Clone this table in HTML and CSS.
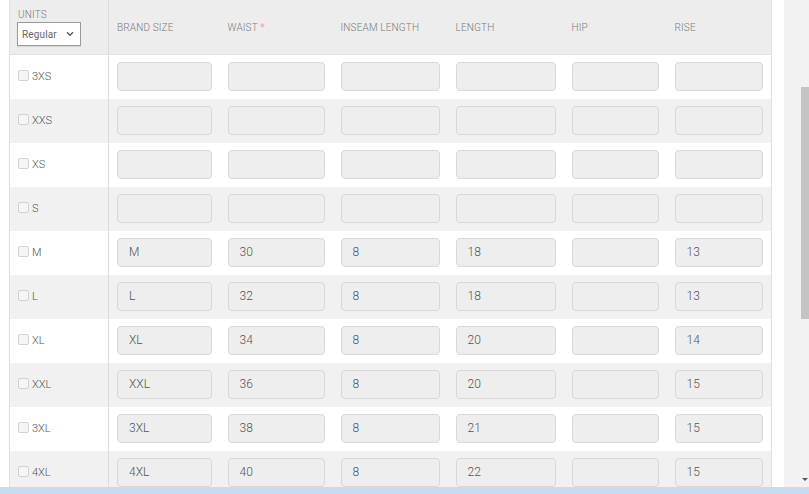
FILE: index.html
```html
<!DOCTYPE html>
<html>
<head>
<meta charset="utf-8">
<link rel="stylesheet" href="styles.css">
</head>
<body>
<div class="frame">
  <div class="main">
    <div class="content">
      <table class="sizes">
        <colgroup>
          <col class="c-units"><col class="c-brand"><col class="c-waist"><col class="c-inseam"><col class="c-length"><col class="c-hip"><col class="c-rise">
        </colgroup>
        <thead>
          <tr>
            <th class="units-head">
              <div class="units-label">UNITS</div>
              <div class="select">
                <span>Regular</span>
                <svg class="chev" width="8" height="6" viewBox="0 0 8 6"><path d="M1 1.2 L4 4.3 L7 1.2" fill="none" stroke="#555" stroke-width="1.3"/></svg>
              </div>
            </th>
            <th>BRAND SIZE</th>
            <th>WAIST <span class="req">*</span></th>
            <th>INSEAM LENGTH</th>
            <th>LENGTH</th>
            <th>HIP</th>
            <th>RISE</th>
          </tr>
        </thead>
        <tbody>
          <tr><td class="lab"><span class="cb"></span>3XS</td><td><div class="in"></div></td><td><div class="in"></div></td><td><div class="in"></div></td><td><div class="in"></div></td><td><div class="in"></div></td><td><div class="in"></div></td></tr>
          <tr><td class="lab"><span class="cb"></span>XXS</td><td><div class="in"></div></td><td><div class="in"></div></td><td><div class="in"></div></td><td><div class="in"></div></td><td><div class="in"></div></td><td><div class="in"></div></td></tr>
          <tr><td class="lab"><span class="cb"></span>XS</td><td><div class="in"></div></td><td><div class="in"></div></td><td><div class="in"></div></td><td><div class="in"></div></td><td><div class="in"></div></td><td><div class="in"></div></td></tr>
          <tr><td class="lab"><span class="cb"></span>S</td><td><div class="in"></div></td><td><div class="in"></div></td><td><div class="in"></div></td><td><div class="in"></div></td><td><div class="in"></div></td><td><div class="in"></div></td></tr>
          <tr><td class="lab"><span class="cb"></span>M</td><td><div class="in">M</div></td><td><div class="in">30</div></td><td><div class="in">8</div></td><td><div class="in">18</div></td><td><div class="in"></div></td><td><div class="in">13</div></td></tr>
          <tr><td class="lab"><span class="cb"></span>L</td><td><div class="in">L</div></td><td><div class="in">32</div></td><td><div class="in">8</div></td><td><div class="in">18</div></td><td><div class="in"></div></td><td><div class="in">13</div></td></tr>
          <tr><td class="lab"><span class="cb"></span>XL</td><td><div class="in">XL</div></td><td><div class="in">34</div></td><td><div class="in">8</div></td><td><div class="in">20</div></td><td><div class="in"></div></td><td><div class="in">14</div></td></tr>
          <tr><td class="lab"><span class="cb"></span>XXL</td><td><div class="in">XXL</div></td><td><div class="in">36</div></td><td><div class="in">8</div></td><td><div class="in">20</div></td><td><div class="in"></div></td><td><div class="in">15</div></td></tr>
          <tr><td class="lab"><span class="cb"></span>3XL</td><td><div class="in">3XL</div></td><td><div class="in">38</div></td><td><div class="in">8</div></td><td><div class="in">21</div></td><td><div class="in"></div></td><td><div class="in">15</div></td></tr>
          <tr><td class="lab"><span class="cb"></span>4XL</td><td><div class="in">4XL</div></td><td><div class="in">40</div></td><td><div class="in">8</div></td><td><div class="in">22</div></td><td><div class="in"></div></td><td><div class="in">15</div></td></tr>
        </tbody>
      </table>
    </div>
    <div class="gutter"></div>
    <div class="scrollbar">
      <div class="thumb"></div>
      <div class="arrow"></div>
    </div>
  </div>
  <div class="bottombar"></div>
</div>
</body>
</html>
```

FILE: styles.css
```css
html, body {
  margin: 0;
  padding: 0;
  background: #ffffff;
}
body {
  font-family: Roboto, "Liberation Sans", Arial, sans-serif;
  color: #666;
}
.frame {
  width: 809px;
  height: 494px;
  display: flex;
  flex-direction: column;
  overflow: hidden;
}
.main {
  height: 487px;
  display: flex;
  overflow: hidden;
}
.content {
  padding-left: 9px;
  width: 763px;
  flex: none;
}
.sizes {
  border-collapse: collapse;
  table-layout: fixed;
  width: 763px;
  border-left: 1px solid #dedede;
  border-right: 1px solid #dedede;
}
.c-units { width: 99px; }
.c-brand { width: 111px; }
.c-waist { width: 113px; }
.c-inseam { width: 115px; }
.c-length { width: 116px; }
.c-hip { width: 103px; }
.c-rise { width: 105px; }

.sizes th {
  height: 54px;
  background: #ededed;
  border-bottom: 1px solid #e2e2e2;
  text-align: left;
  font-weight: 300;
  font-size: 10px;
  color: #7c7c7c;
  padding: 0 8px;
  letter-spacing: 0.15px;
}
.sizes th.units-head {
  border-right: 1px solid #dcdcdc;
  padding: 0 0 0 8px;
  vertical-align: top;
}
.units-label {
  margin-top: 9px;
  line-height: 12px;
  font-size: 10px;
  color: #7c7c7c;
}
.select {
  margin-top: 1px;
  margin-left: -1px;
  width: 64px;
  height: 24px;
  box-sizing: border-box;
  border: 1px solid #9a9a9a;
  background: #fff;
  display: flex;
  align-items: center;
  justify-content: space-between;
  padding: 0 6px 0 4px;
  font-size: 10px;
  font-weight: 400;
  color: #666;
  box-shadow: 0 1px 1px rgba(0,0,0,0.08);
}
.chev { display: block; }
.req { color: #e58b8b; }

.sizes td {
  height: 44px;
  padding: 0 8px;
  box-sizing: border-box;
}
.sizes tbody tr:nth-child(even) td {
  background: #f1f1f1;
}
.sizes td.lab {
  border-right: 1px solid #dcdcdc;
  padding-left: 8px;
  font-size: 11px;
  font-weight: 300;
  color: #555;
}
.cb {
  display: inline-block;
  width: 9px;
  height: 9px;
  border: 1px solid #d3d3d3;
  border-radius: 2px;
  background: #f5f5f5;
  margin-right: 3px;
  vertical-align: -1px;
}
.in {
  height: 29px;
  box-sizing: border-box;
  border: 1px solid #d8d8d8;
  border-radius: 4px;
  background: #eeeeee;
  padding-left: 11px;
  font-size: 12px;
  font-weight: 300;
  line-height: 27px;
  color: #555;
}
.gutter {
  width: 12px;
  flex: none;
}
.scrollbar {
  flex: 1;
  background: #f2f2f2;
  position: relative;
  display: flex;
  flex-direction: column;
  align-items: flex-end;
}
.thumb {
  margin-top: 87px;
  width: 8px;
  height: 232px;
  background: #c4c4c4;
}
.arrow {
  position: absolute;
  right: 1px;
  bottom: 6px;
  width: 0;
  height: 0;
  border-left: 3px solid transparent;
  border-right: 3px solid transparent;
  border-top: 3px solid #555;
}
.bottombar {
  height: 7px;
  background: #c9dbef;
  flex: none;
}
```
